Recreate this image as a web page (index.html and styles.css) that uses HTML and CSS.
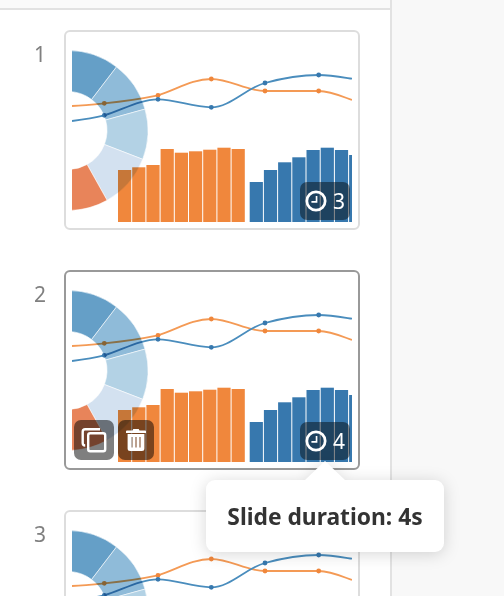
FILE: index.html
```html
<!DOCTYPE html>
<html lang="en">
  <head>
    <meta charset="UTF-8" />
    <title>Slides</title>
    <link rel="stylesheet" href="styles.css">
  </head>
  <body>
    <svg class="sprites" xmlns="http://www.w3.org/2000/svg">
      <symbol id="chart" viewBox="72 38 280 184">
        <g class="ring">
          <path fill="#659fc7" d="M68 50.5A80 80 0 0 1 116.500 66.900L91.600 99.500A39 39 0 0 0 68 91.500Z" />
          <path fill="#8fbbd9" d="M116.500 66.900A80 80 0 0 1 145 109.100L105.600 120A39 39 0 0 0 91.600 99.500Z" />
          <path fill="#b3d2e5" d="M145 109.100A80 80 0 0 1 142.700 159.300L104.400 144.500A39 39 0 0 0 105.600 120Z" />
          <path fill="#d3e1f0" d="M142.700 159.300A80 80 0 0 1 107.100 200.300L87.100 164.500A39 39 0 0 0 104.400 144.500Z" />
          <path fill="#e8845a" d="M107.100 200.300A80 80 0 0 1 68 210.500V169.500A39 39 0 0 0 87.100 164.500Z" />
        </g>
        <g class="series">
          <path class="line line-orange" d="M72 106C83 105.500 93 104.500 104.300 103.300C122 101.500 140 99 158 95.300C176 90 192 79 211.300 79C230 79 246 91 265 91C283 91 301 91 318.700 91C330 91 341 96 352 100" />
          <g class="dots-orange">
            <circle cx="104.300" cy="103.300" r="2.400" />
            <circle cx="158" cy="95.300" r="2.400" />
            <circle cx="211.300" cy="79" r="2.400" />
            <circle cx="265" cy="91" r="2.400" />
            <circle cx="318.700" cy="91" r="2.400" />
          </g>
          <path class="line line-blue" d="M72 121C83 119.500 93 118 104.300 115.300C122 110 140 99.300 158 99.300C176 99.300 192 107.300 211.300 107.300C230 107.300 246 88 265 83C283 78 301 75 318.700 75C330 75 341 77 352 78.700" />
          <g class="dots-blue">
            <circle cx="104.300" cy="115.300" r="2.400" />
            <circle cx="158" cy="99.300" r="2.400" />
            <circle cx="211.300" cy="107.300" r="2.400" />
            <circle cx="265" cy="83" r="2.400" />
            <circle cx="318.700" cy="75" r="2.400" />
          </g>
          <g class="bars-orange">
            <rect x="118" y="170" width="13.200" height="52" />
            <rect x="132.200" y="167.300" width="13.200" height="54.700" />
            <rect x="146.400" y="165" width="13.200" height="57" />
            <rect x="160.600" y="149" width="13.200" height="73" />
            <rect x="174.800" y="152.700" width="13.200" height="69.300" />
            <rect x="189" y="151.300" width="13.200" height="70.700" />
            <rect x="203.200" y="149.700" width="13.200" height="72.300" />
            <rect x="217.400" y="147.700" width="13.200" height="74.300" />
            <rect x="231.600" y="149" width="13.200" height="73" />
          </g>
          <g class="bars-blue">
            <rect x="249.700" y="182" width="13.200" height="40" />
            <rect x="263.900" y="170" width="13.200" height="52" />
            <rect x="278.100" y="162.300" width="13.200" height="59.700" />
            <rect x="292.300" y="157.300" width="13.200" height="64.700" />
            <rect x="306.500" y="150" width="13.200" height="72" />
            <rect x="320.700" y="147.700" width="13.200" height="74.300" />
            <rect x="334.900" y="150" width="13.200" height="72" />
            <rect x="349.100" y="155" width="13.200" height="67" />
          </g>
        </g>
      </symbol>
      <symbol id="clock" viewBox="0 0 24 24">
        <circle cx="12" cy="12" r="10" fill="none" stroke="#fff" stroke-width="3" />
        <path d="M12.600 6.500V13H7" fill="none" stroke="#fff" stroke-width="1.800" />
      </symbol>
    </svg>

    <div class="panel">
      <div class="topbar"></div>
      <ul class="slides">
        <li class="slide">
          <span class="slide-num">1</span>
          <div class="thumb">
            <svg class="thumb-chart"><use href="#chart" /></svg>
            <div class="duration">
              <svg class="clock"><use href="#clock" /></svg>
              <span>3</span>
            </div>
          </div>
        </li>
        <li class="slide">
          <span class="slide-num">2</span>
          <div class="thumb thumb-active">
            <svg class="thumb-chart"><use href="#chart" /></svg>
            <div class="actions">
              <button class="action action-copy" type="button" aria-label="Duplicate">
                <svg width="26" height="26" viewBox="0 0 26 26" fill="none" stroke="#fff" stroke-width="2.400">
                  <rect x="7.200" y="6.200" width="17" height="18" rx="2" />
                  <path d="M19 2.200H4.200a2.500 2.500 0 0 0-2.500 2.500V16a2.500 2.500 0 0 0 2.500 2.500" />
                </svg>
              </button>
              <button class="action action-trash" type="button" aria-label="Delete">
                <svg width="20" height="22" viewBox="0 0 20 22">
                  <path fill="#fff" fill-rule="evenodd" d="M6.500 1.500 7.300 0h5.400l.8 1.500H19a1 1 0 0 1 1 1V4H0V2.500a1 1 0 0 1 1-1ZM1.600 5h16.800v14.500a2.500 2.500 0 0 1-2.500 2.500H4.100a2.500 2.500 0 0 1-2.500-2.500ZM5.500 8v10.500h1V8ZM9.500 8v10.500h1V8ZM13.500 8v10.500h1V8Z" />
                </svg>
              </button>
            </div>
            <div class="duration">
              <svg class="clock"><use href="#clock" /></svg>
              <span>4</span>
            </div>
            <div class="tooltip">Slide duration: 4s</div>
          </div>
        </li>
        <li class="slide slide-cut">
          <span class="slide-num">3</span>
          <div class="thumb">
            <svg class="thumb-chart"><use href="#chart" /></svg>
          </div>
        </li>
      </ul>
    </div>
  </body>
</html>
```

FILE: styles.css
```css
* {
  margin: 0;
  padding: 0;
  box-sizing: border-box;
}

html,
body {
  height: 596px;
  overflow: hidden;
}

body {
  background-color: #f8f8f8;
  font-family: 'Noto Sans', sans-serif;
}

.sprites {
  display: none;
}

.panel {
  width: 392px;
  height: 596px;
  background-color: #fff;
  border-right: 2px solid #e2e2e2;
}

.topbar {
  height: 10px;
  background-color: #fafafa;
  border-bottom: 2px solid #e2e2e2;
}

.slides {
  list-style: none;
  display: flex;
  flex-direction: column;
  gap: 40px;
  padding-top: 20px;
  padding-left: 16px;
}

.slide {
  display: flex;
}

/* third slide runs under the bottom of the window */
.slide-cut {
  height: 86px;
  overflow: hidden;
}

.slide-num {
  width: 48px;
  padding-top: 10px;
  text-align: center;
  font-size: 21px;
  line-height: 28px;
  color: #808080;
}

.thumb {
  position: relative;
  flex: none;
  width: 296px;
  height: 200px;
  padding: 6px;
  background-color: #fff;
  border: 2px solid #ddd;
  border-radius: 6px;
}

.thumb-active {
  border-color: #999;
}

.thumb-chart {
  display: block;
  width: 280px;
  height: 184px;
}

.ring {
  stroke: rgba(255, 255, 255, 0.7);
  stroke-width: 0.8;
}

.series {
  mix-blend-mode: multiply;
}

.line {
  fill: none;
  stroke-width: 1.800;
}

.line-orange {
  stroke: #f49a55;
}

.line-blue {
  stroke: #4a8dbd;
}

.dots-orange {
  fill: #f0873c;
}

.dots-blue {
  fill: #3778ae;
}

.bars-orange {
  fill: #f0873c;
}

.bars-blue {
  fill: #3778ae;
}

.duration {
  position: absolute;
  right: 8px;
  bottom: 8px;
  display: flex;
  align-items: center;
  gap: 6px;
  width: 50px;
  height: 38px;
  padding-left: 5px;
  background-color: rgba(0, 0, 0, 0.45);
  border-radius: 7px;
  font-size: 21px;
  color: #fff;
}

.clock {
  flex: none;
  width: 22px;
  height: 22px;
}

.actions {
  position: absolute;
  left: 8px;
  bottom: 8px;
  display: flex;
  gap: 4px;
}

.action {
  display: flex;
  align-items: center;
  justify-content: center;
  height: 40px;
  border: none;
  border-radius: 7px;
  background-color: rgba(0, 0, 0, 0.5);
}

.action-copy {
  width: 40px;
}

.action-trash {
  width: 36px;
}

.tooltip {
  position: absolute;
  left: 140px;
  top: 208px;
  z-index: 2;
  width: 238px;
  height: 72px;
  line-height: 74px;
  text-align: center;
  font-size: 22.800px;
  font-weight: 700;
  color: #333;
  background-color: #fff;
  border-radius: 9px;
  filter: drop-shadow(0 2px 8px rgba(0, 0, 0, 0.16));
}

.tooltip::before {
  content: '';
  position: absolute;
  left: 99px;
  top: -19px;
  border-left: 20px solid transparent;
  border-right: 20px solid transparent;
  border-bottom: 19px solid #fff;
}
```
